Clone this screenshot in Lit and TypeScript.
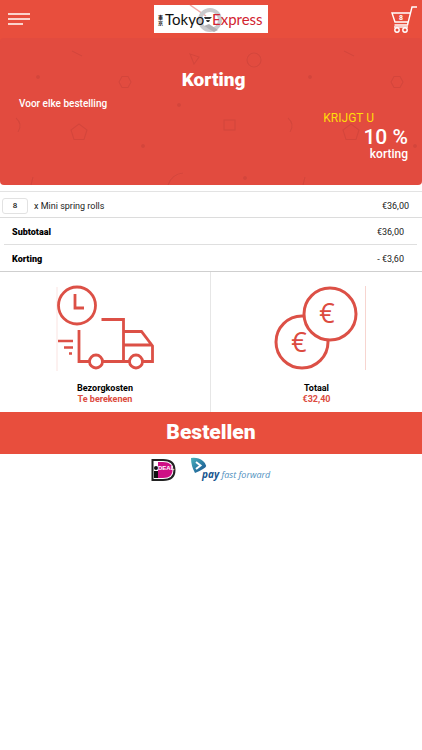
import { LitElement, html, css, svg } from "lit";
import { customElement, property, state } from "lit/decorators.js";

@customElement("site-header")
class SiteHeader extends LitElement {
  @property({ type: Number }) count = 0;

  static styles = css`
    :host {
      display: block;
    }
    .bar {
      display: grid;
      grid-template-columns: 1fr auto 1fr;
      align-items: center;
      height: 38px;
      padding: 0 4px;
      background: #e84e3d;
    }
    button {
      padding: 0;
      border: 0;
      background: none;
      cursor: pointer;
      line-height: 0;
    }
    .cart {
      justify-self: end;
    }
    .menu {
      justify-self: start;
      padding: 0 4px;
    }
    .brand {
      display: block;
      line-height: 0;
    }
    .badge {
      font: 700 7px Roboto, sans-serif;
      fill: #fff;
    }
    .word {
      font: 400 15px Lato, sans-serif;
    }
    .cjk {
      font: 700 5px "Noto Sans CJK JP", sans-serif;
    }
  `;

  render() {
    return html`
      <header class="bar">
        <button class="menu" aria-label="Menu">
          <svg width="24" height="14" viewBox="0 0 24 14" stroke="#fbd3cc" stroke-width="2">
            <path d="M0 2H22M0 7H22M0 12H15" />
          </svg>
        </button>
        <a class="brand" href="#" aria-label="Tokyo Express">
          <svg width="114" height="28" viewBox="0 0 114 28">
            <rect width="114" height="28" fill="#fff" />
            <path d="M36 0L52 11" stroke="#f0a9a6" stroke-width="1.5" />
            <circle cx="56" cy="15" r="10" fill="none" stroke="#c9c9cc" stroke-width="4" />
            <path d="M50 21L60 27L64 25L55 19Z" fill="#b0b0b4" />
            <path d="M50 12H58L56 14H51ZM52 15H56L55 17H53Z" fill="#333" />
            <text class="cjk" x="4" y="14">東</text>
            <text class="cjk" x="4" y="20">京</text>
            <text class="word" x="11" y="20" fill="#111">Tokyo</text>
            <text class="word" x="58" y="20" fill="#d2232f">Express</text>
          </svg>
        </a>
        <button class="cart" aria-label="Winkelwagen">
          <svg width="28" height="28" viewBox="0 0 28 28" fill="none" stroke="#fff" stroke-width="1.4">
            <path d="M27 2H22L17.5 20H4.500M20 8H2L5 17H18.300" />
            <circle cx="7" cy="25" r="2.200" />
            <circle cx="15" cy="25" r="2.200" />
            <path d="M4 22H18" />
            <text class="badge" x="9" y="15" stroke="none">${this.count}</text>
          </svg>
        </button>
      </header>
    `;
  }
}

@customElement("promo-banner")
class PromoBanner extends LitElement {
  static styles = css`
    :host {
      display: block;
      background: linear-gradient(#e84e3d 50%, #fff 50%);
    }
    .banner {
      position: relative;
      overflow: hidden;
      box-sizing: border-box;
      min-height: 147px;
      padding: 28px 14px 24px 19px;
      border-radius: 4px;
      background: #e24b3f;
      color: #fff;
      font-family: Roboto, sans-serif;
      display: flex;
      flex-direction: column;
    }
    .pattern {
      position: absolute;
      inset: 0;
      width: 100%;
      height: 100%;
    }
    h2,
    p {
      position: relative;
      margin: 0;
    }
    h2 {
      align-self: center;
      font-size: 19px;
      line-height: 28px;
      font-weight: 900;
    }
    .who {
      font-size: 10px;
      line-height: 20px;
      font-weight: 500;
    }
    .offer {
      display: flex;
      flex-direction: column;
      align-items: flex-end;
    }
    .get {
      padding-right: 34px;
      color: #ffdd0a;
      font-size: 12px;
      line-height: 8px;
      font-weight: 400;
    }
    .amount {
      padding-top: 4px;
      font-size: 21px;
      line-height: 22px;
      font-weight: 500;
    }
    .what {
      font-size: 12px;
      line-height: 12px;
      font-weight: 500;
    }
  `;

  render() {
    return html`
      <section class="banner">
        <svg class="pattern" aria-hidden="true">
          <defs>
            <pattern id="confetti" width="272" height="300" patternUnits="userSpaceOnUse">
              <g fill="none" stroke="#cb4138" stroke-width="1.2" opacity="0.6">
                <path d="M72 13L82 18" />
                <path d="M119 44L122 38.500H128L131 44L128 49.500H122Z" />
                <path d="M190 16L199 19L194 26Z" />
                <path d="M16 80Q23 86 18 94" />
                <path d="M79 86L87 92L84 101.500H74L71 92Z" />
                <path d="M168 147Q172 136 183 135" />
                <path d="M33 139L31 147" />
                <circle cx="254" cy="22" r="7" />
                <rect x="224" y="82" width="11" height="10" />
              </g>
              <g fill="#cb4138" opacity="0.6">
                <circle cx="38" cy="39" r="2" />
                <circle cx="179" cy="67" r="2" />
                <circle cx="143" cy="108" r="2" />
                <circle cx="245" cy="140" r="2" />
              </g>
            </pattern>
          </defs>
          <rect width="100%" height="100%" fill="url(#confetti)" />
        </svg>
        <h2>Korting</h2>
        <p class="who">Voor elke bestelling</p>
        <div class="offer">
          <p class="get">KRIJGT U</p>
          <p class="amount">10 %</p>
          <p class="what">korting</p>
        </div>
      </section>
    `;
  }
}

@customElement("order-summary")
class OrderSummary extends LitElement {
  @property({ type: Number }) quantity = 0;

  static styles = css`
    :host {
      display: block;
      padding-top: 6px;
      font-family: Roboto, sans-serif;
      font-size: 9px;
      line-height: 12px;
      color: #222;
    }
    .row {
      display: flex;
      align-items: center;
      justify-content: space-between;
      box-sizing: border-box;
      height: 27px;
    }
    .item {
      padding: 2px 13px 0 2px;
      border-top: 1px solid #e3e3e3;
      border-bottom: 1px solid #dcdcdc;
    }
    label {
      display: flex;
      align-items: center;
      gap: 6px;
    }
    input {
      box-sizing: border-box;
      width: 26px;
      height: 16px;
      padding: 0;
      border: 1px solid #e2e2e2;
      border-radius: 3px;
      background: #fff;
      color: #222;
      font: 500 8px Roboto, sans-serif;
      text-align: center;
    }
    dl,
    dt,
    dd {
      margin: 0;
    }
    dl {
      padding: 0 5px 0 4px;
      border-bottom: 1px solid #cfcfcf;
    }
    .total {
      padding: 2px 13px 0 8px;
      border-bottom: 1px solid #dfdfdf;
    }
    .total:last-child {
      height: 26px;
      border-bottom: 0;
    }
    dt {
      color: #000;
      font-weight: 900;
    }
  `;

  render() {
    return html`
      <div class="row item">
        <label>
          <input type="text" inputmode="numeric" .value=${String(this.quantity)} />
          <span>x Mini spring rolls</span>
        </label>
        <span>€36,00</span>
      </div>
      <dl>
        <div class="row total"><dt>Subtotaal</dt><dd>€36,00</dd></div>
        <div class="row total"><dt>Korting</dt><dd>- €3,60</dd></div>
      </dl>
    `;
  }
}

@customElement("cost-tiles")
class CostTiles extends LitElement {
  static styles = css`
    :host {
      display: grid;
      grid-template-columns: 1fr 1fr;
      font-family: Roboto, sans-serif;
      font-size: 9px;
      line-height: 11px;
      font-weight: 700;
      text-align: center;
    }
    .tile {
      display: flex;
      flex-direction: column;
      align-items: center;
      padding: 12px 0 7px;
    }
    .tile:first-child {
      border-right: 1px solid #e6e6e6;
    }
    svg {
      display: block;
      margin-bottom: 11px;
    }
    p {
      margin: 0;
      color: #000;
    }
    .value {
      color: #dc4b40;
    }
    .euro {
      font: 400 27px "Open Sans", sans-serif;
      fill: #dc4b40;
      text-anchor: middle;
    }
  `;

  private truck() {
    return svg`
      <g fill="none" stroke="#dc5046" stroke-width="2.800">
        <path d="M2 3V87" stroke="#fae3e1" stroke-width="1" />
        <circle cx="22" cy="21.500" r="18.500" />
        <path d="M20 10V24H29" />
        <path d="M46.500 35.500H68.500V77.500M24 46V77.500H35M46 77.500H75M87 77.500H97.500V62L86.500 47.500H69M69 61H97" />
        <circle cx="41" cy="77.500" r="6.500" />
        <circle cx="81" cy="77.500" r="6.500" />
        <path d="M3 57H18M9 63.500H18M14 69.500H17" stroke-width="2.600" />
      </g>`;
  }

  private coins() {
    return svg`
      <circle cx="42" cy="58" r="26" fill="#fff" stroke="#dc5046" stroke-width="3" />
      <circle cx="70" cy="30" r="26" fill="#fff" stroke="#dc5046" stroke-width="3" />
      <text class="euro" x="67" y="39">€</text>
      <text class="euro" x="39" y="68">€</text>
      <path d="M105.500 2V86" stroke="#f7d5d0" />`;
  }

  render() {
    return html`
      <section class="tile">
        <svg width="100" height="88" viewBox="0 0 100 88" aria-hidden="true">${this.truck()}</svg>
        <p>Bezorgkosten</p>
        <p class="value">Te berekenen</p>
      </section>
      <section class="tile">
        <svg width="114" height="88" viewBox="0 0 114 88" aria-hidden="true">${this.coins()}</svg>
        <p>Totaal</p>
        <p class="value">€32,40</p>
      </section>
    `;
  }
}

@customElement("payment-logos")
class PaymentLogos extends LitElement {
  static styles = css`
    :host {
      display: flex;
      justify-content: center;
      gap: 14px;
      padding-top: 2px;
    }
    .deal {
      font: 700 6px "Liberation Sans", sans-serif;
      fill: #fff;
    }
    .pay {
      font: italic 700 10px "Open Sans", sans-serif;
      fill: #17558f;
    }
    .fast {
      font: italic 400 9px "Open Sans", sans-serif;
      fill: #4f8fbe;
    }
  `;

  render() {
    return html`
      <svg width="26" height="26" viewBox="0 0 26 26" role="img" aria-label="iDEAL">
        <path d="M2.500 4H13C21 4 24.500 8 24.500 14S21 24 13 24H2.500Z" fill="#fff" stroke="#222" stroke-width="2" />
        <path d="M8 6H13C19.500 6 22.500 9 22.500 14S19.500 22 13 22H8Z" fill="#cf1085" />
        <circle cx="6" cy="12" r="2" fill="#111" />
        <path d="M4 15H8V22H4Z" fill="#111" />
        <text class="deal" x="8" y="14">DEAL</text>
      </svg>
      <svg width="82" height="28" viewBox="0 0 82 28" role="img" aria-label="pay fast forward">
        <defs>
          <linearGradient id="play" x1="0" x2="1" y1="0" y2="1">
            <stop offset="0" stop-color="#48b3bd" />
            <stop offset="1" stop-color="#164e8e" />
          </linearGradient>
        </defs>
        <path d="M1 2Q8 1 13 5Q19 10 13 13Q10 15 5 17Q1 10 1 2Z" fill="url(#play)" />
        <path d="M6 6L10.500 9.500L6 13" fill="none" stroke="#fff" stroke-width="2" />
        <text x="12" y="22"><tspan class="pay">pay</tspan><tspan class="fast"> fast forward</tspan></text>
      </svg>
    `;
  }
}

@customElement("app-root")
class AppRoot extends LitElement {
  @state() private quantity = 8;

  static styles = css`
    :host {
      display: block;
      min-height: 100vh;
      background: #fff;
    }
    .order {
      display: block;
      width: 100%;
      height: 42px;
      padding: 0 0 3px;
      border: 0;
      background: #e84e3d;
      color: #fff;
      font: 900 21px Roboto, sans-serif;
      cursor: pointer;
    }
  `;

  render() {
    return html`
      <site-header .count=${this.quantity}></site-header>
      <main>
        <promo-banner></promo-banner>
        <order-summary .quantity=${this.quantity}></order-summary>
        <cost-tiles></cost-tiles>
        <button class="order">Bestellen</button>
        <payment-logos></payment-logos>
      </main>
    `;
  }
}
